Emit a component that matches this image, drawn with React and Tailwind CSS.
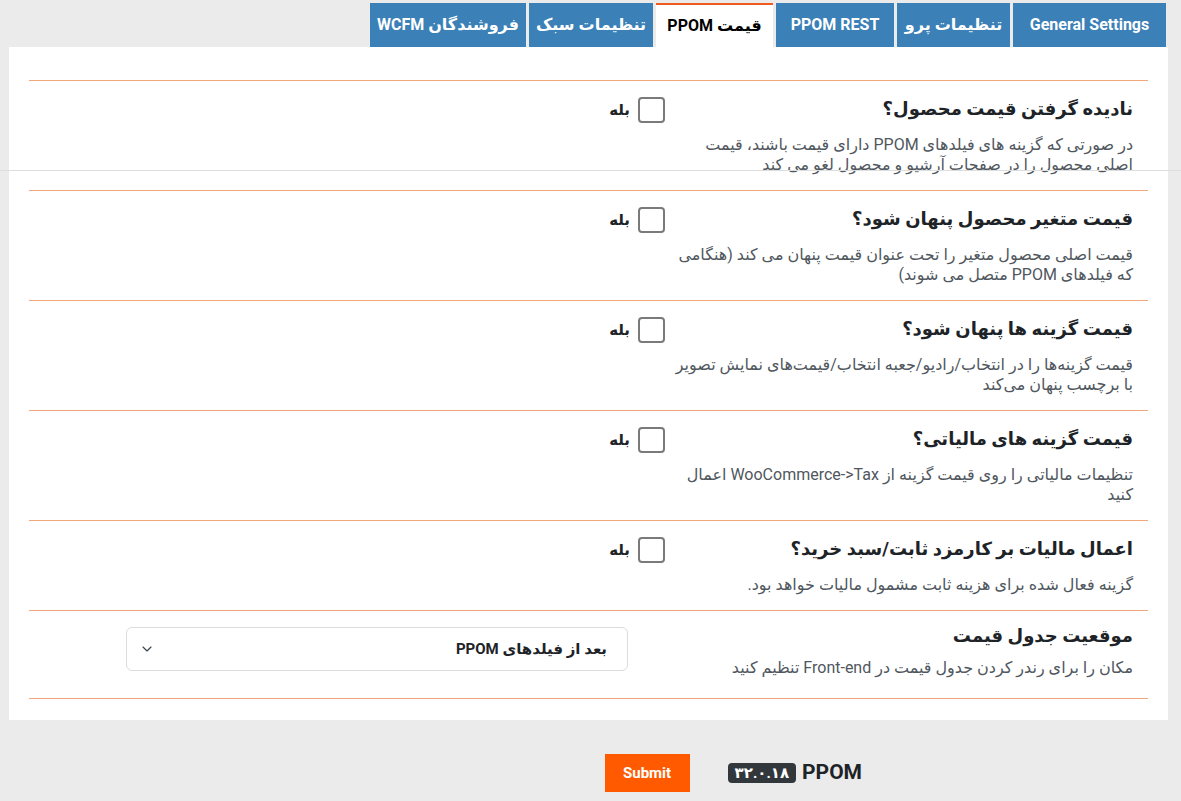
import { ChevronDown } from "lucide-react";

const tabs = [
  { label: "General Settings", w: "w-[153px]" },
  { label: "تنظیمات پرو", w: "w-[113px]" },
  { label: "PPOM REST", w: "w-[118px]" },
  { label: "قیمت PPOM", w: "w-[117px]", active: true },
  { label: "تنظیمات سبک", w: "w-[124px]" },
  { label: "فروشندگان WCFM", w: "w-[156px]" },
];

const rows = [
  {
    title: "نادیده گرفتن قیمت محصول؟",
    desc: "در صورتی که گزینه های فیلدهای PPOM دارای قیمت باشند، قیمت اصلی محصول را در صفحات آرشیو و محصول لغو می کند",
  },
  {
    title: "قیمت متغیر محصول پنهان شود؟",
    desc: "قیمت اصلی محصول متغیر را تحت عنوان قیمت پنهان می کند (هنگامی که فیلدهای PPOM متصل می شوند)",
  },
  {
    title: "قیمت گزینه ها پنهان شود؟",
    desc: "قیمت گزینه‌ها را در انتخاب/رادیو/جعبه انتخاب/قیمت‌های نمایش تصویر با برچسب پنهان می‌کند",
  },
  {
    title: "قیمت گزینه های مالیاتی؟",
    desc: "تنظیمات مالیاتی را روی قیمت گزینه از WooCommerce->Tax اعمال کنید",
  },
  {
    title: "اعمال مالیات بر کارمزد ثابت/سبد خرید؟",
    desc: "گزینه فعال شده برای هزینه ثابت مشمول مالیات خواهد بود.",
  },
];

const font = { fontFamily: "Roboto, 'DejaVu Sans', sans-serif" };

const Row = ({ title, desc, children }) => (
  <div className="flex border-b border-[#f2a77a]">
    <div className="w-[480px] shrink-0 pr-[15px] pt-4 pb-[15px]">
      <h3 className="text-[18px] leading-6 font-bold text-[#1d2327]">{title}</h3>
      <p className="mt-[14px] text-[16px] leading-5 text-[#50575e]">{desc}</p>
    </div>
    <div className="flex-1 pt-4">{children}</div>
  </div>
);

const CheckField = () => (
  <label className="flex items-center gap-2 pr-[3px]">
    <span className="w-[27px] h-[26px] rounded-[4px] border-2 border-[#7a7a7a] bg-white"></span>
    <span className="text-[15px] font-bold text-[#1d2327]">بله</span>
  </label>
);

export default function App() {
  return (
    <div dir="rtl" style={font} className="relative min-h-[801px] bg-[#ebebeb] pl-[9px] pr-[13px] pt-[3px]">
      <div className="flex gap-[3px] pr-[2px]">
        {tabs.map((t) =>
          t.active ? (
            <div
              key={t.label}
              className={`${t.w} h-[44px] flex items-center justify-center bg-white border-t-2 border-[#f05a1e] text-[16px] font-bold text-black`}
            >
              {t.label}
            </div>
          ) : (
            <div
              key={t.label}
              className={`${t.w} h-[44px] flex items-center justify-center bg-[#3b80b6] text-[16px] font-bold text-white`}
            >
              {t.label}
            </div>
          )
        )}
      </div>

      <div className="bg-white px-5 pt-[33px] pb-[21px]">
        <div className="border-t border-[#f2a77a]">
          {rows.map((r) => (
            <Row key={r.title} title={r.title} desc={r.desc}>
              <CheckField />
            </Row>
          ))}
          <div className="flex border-b border-[#f2a77a] h-[88px]">
            <div className="w-[480px] shrink-0 pr-[15px] pt-[13px]">
              <h3 className="text-[18px] leading-6 font-bold text-[#1d2327]">موقعیت جدول قیمت</h3>
              <p className="mt-[10px] text-[16px] leading-5 text-[#50575e]">
                مکان را برای رندر کردن جدول قیمت در Front-end تنظیم کنید
              </p>
            </div>
            <div className="flex-1 pt-4 pr-[40px]">
              <div className="w-[502px] h-[44px] rounded-[6px] border border-[#dcdcde] flex items-center justify-between pr-5 pl-3">
                <span className="text-[15px] font-bold text-[#1d2327]">بعد از فیلدهای PPOM</span>
                <ChevronDown size={16} strokeWidth={1.75} className="text-[#3c434a]" />
              </div>
            </div>
          </div>
        </div>
      </div>

      <div className="flex items-center pr-[306px] pt-[34px] gap-[38px]">
        <div className="flex items-center gap-[6px]">
          <span className="text-[21px] font-bold text-[#1d2327]">PPOM</span>
          <span className="bg-[#32373c] text-white text-[15px] font-bold rounded-[4px] px-[7px] h-[20px] flex items-center">
            ۳۲.۰.۱۸
          </span>
        </div>
        <button className="bg-[#ff5a00] text-white text-[15px] font-bold w-[85px] h-[38px]">Submit</button>
      </div>

      <div className="pointer-events-none absolute left-0 right-0 top-[170px] h-px bg-[#dedede]"></div>
    </div>
  );
}
